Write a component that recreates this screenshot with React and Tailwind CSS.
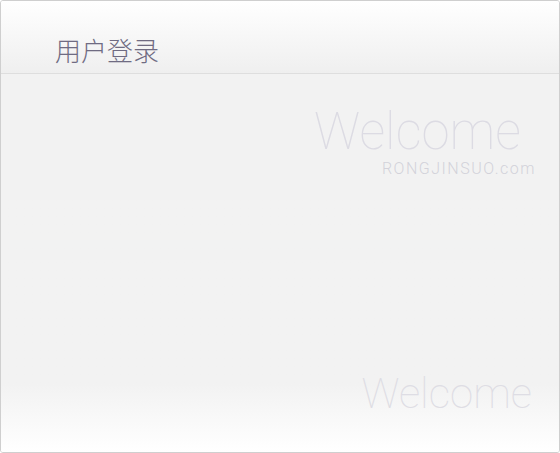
import React from 'react';

const App = () => {
  return (
    <div className="w-[560px] h-[453px] bg-white">
      <div className="w-full h-full flex flex-col border border-[#cfcfcf] rounded-[3px] overflow-hidden font-['Roboto','Noto_Sans_CJK_SC',sans-serif]">
        {/* 标题栏 */}
        <div className="h-[73px] flex items-end pl-[54px] pb-[8px] bg-gradient-to-b from-white to-[#efefef] border-b border-[#dedede] shadow-[0_1px_0_#ffffff]">
          <h1 className="text-[26px] leading-[30px] font-['Noto_Sans_CJK_SC',sans-serif] font-light text-[#6f6b82]">
            用户登录
          </h1>
        </div>

        {/* 内容区 */}
        <div className="flex-1 flex flex-col justify-between bg-gradient-to-b from-[#f2f2f2] from-[82%] to-white pt-[30px] pb-[34px] pr-[24px]">
          <div className="flex flex-col items-end">
            <div className="text-[51px] leading-[56px] font-thin text-[#dcdbe3] mr-[14px]">
              Welcome
            </div>
            <div className="text-[16px] leading-[18px] font-light tracking-[1.5px] text-[#d3d2da] mr-[-1px]">
              RONGJINSUO.com
            </div>
          </div>
          <div className="flex justify-end">
            <div className="text-[42px] leading-[48px] font-thin text-[#dedde4] mr-[3px]">
              Welcome
            </div>
          </div>
        </div>
      </div>
    </div>
  );
};

export default App;
